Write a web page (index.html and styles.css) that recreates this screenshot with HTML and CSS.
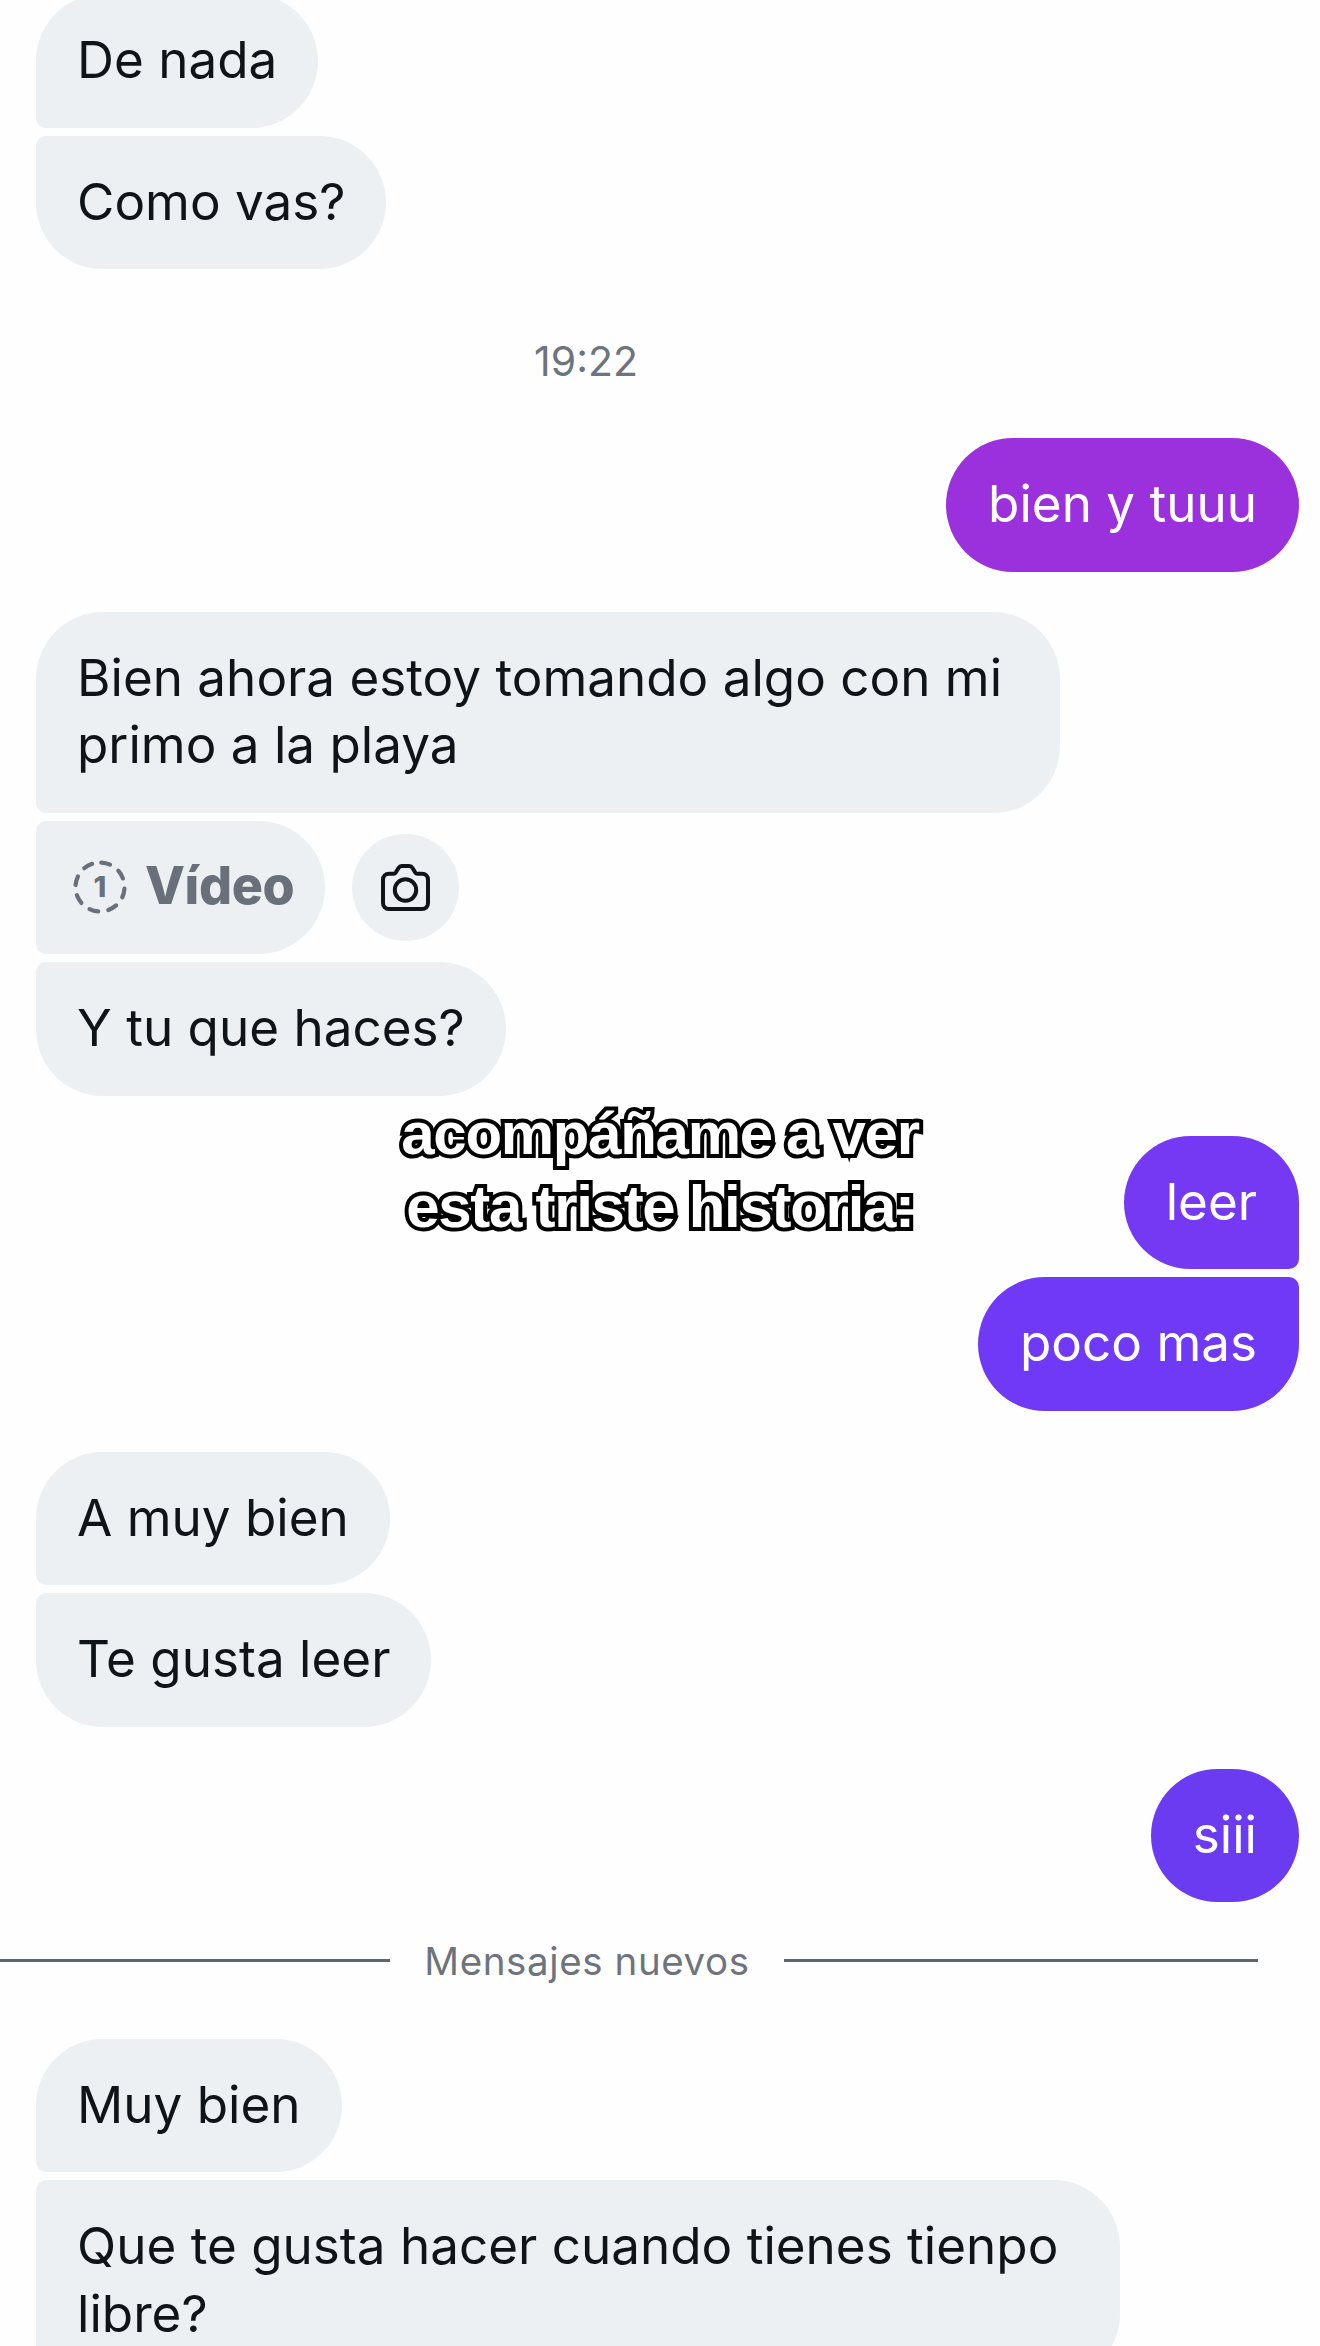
FILE: index.html
```html
<!DOCTYPE html>
<html lang="es">
<head>
<meta charset="utf-8">
<title>Chat</title>
<link rel="stylesheet" href="styles.css">
</head>
<body>
<main class="chat">
  <section class="group in first">
    <div class="bubble in-top">De nada</div>
    <div class="bubble in-end">Como vas?</div>
  </section>
  <div class="time">19:22</div>
  <section class="group out g-bien">
    <div class="bubble solo c-magenta">bien y tuuu</div>
  </section>
  <section class="group in g-ahora">
    <div class="bubble in-top wide-a">Bien ahora estoy tomando algo con mi primo a la playa</div>
    <div class="media-row">
      <div class="bubble in-mid video">
        <svg class="once" viewBox="0 0 54 54" aria-hidden="true">
          <circle cx="27" cy="27" r="24.500" fill="none" stroke="#6a7079" stroke-width="4.200" stroke-dasharray="9 10.240" stroke-linecap="round" transform="rotate(-87 27 27)"/>
        </svg>
        <span class="once-n">1</span>
        <span class="video-label">Vídeo</span>
      </div>
      <button class="cam" aria-label="Cámara">
        <svg viewBox="0 0 49 47" aria-hidden="true">
          <path d="M8 9.700H12.500c1 0 1.800-.5 2.400-1.400L17.500 4c.8-1.300 1.800-2 3.300-2h7.400c1.500 0 2.500.7 3.300 2l2.600 4.300c.6.900 1.400 1.400 2.400 1.400H41c3.600 0 6 2.400 6 6V39c0 3.600-2.400 6-6 6H8c-3.600 0-6-2.400-6-6V15.700c0-3.600 2.400-6 6-6z" fill="none" stroke="#0f1419" stroke-width="4" stroke-linejoin="round"/>
          <circle cx="24.500" cy="26" r="10.700" fill="none" stroke="#0f1419" stroke-width="4"/>
        </svg>
      </button>
    </div>
    <div class="bubble in-end">Y tu que haces?</div>
  </section>
  <section class="group out g-leer">
    <div class="bubble out-top c-violet">leer</div>
    <div class="bubble out-end c-indigo">poco mas</div>
  </section>
  <section class="group in g-muy">
    <div class="bubble in-top">A muy bien</div>
    <div class="bubble in-end">Te gusta leer</div>
  </section>
  <section class="group out g-siii">
    <div class="bubble solo c-blue">siii</div>
  </section>
  <div class="divider"><span class="rule"></span><span class="divider-text">Mensajes nuevos</span><span class="rule rule-r"></span></div>
  <section class="group in g-new">
    <div class="bubble in-top">Muy bien</div>
    <div class="bubble in-tail wide-b">Que te gusta hacer cuando tienes tienpo libre?</div>
  </section>
</main>
<div class="caption">acompáñame a ver<br>esta triste historia:</div>
</body>
</html>
```
FILE: styles.css
```css
* { box-sizing: border-box; }
html, body { margin: 0; padding: 0; }
body {
  position: relative;
  width: 1320px;
  height: 2346px;
  overflow: hidden;
  background: #fefefe;
  color: #0f1419;
  font-family: Inter, "Liberation Sans", sans-serif;
}
.chat { display: flex; flex-direction: column; padding: 0 21px 0 36px; }
.group { display: flex; flex-direction: column; gap: 8px; }
.group.in { align-items: flex-start; }
.group.out { align-items: flex-end; }
.first { margin-top: -6px; }
.bubble {
  padding: 32px 41px 34px;
  font-size: 51.200px;
  line-height: 67.500px;
  background: #ecf0f3;
  border-radius: 67px;
}
.in-top { border-radius: 67px 67px 67px 10px; }
.in-mid { border-radius: 10px 67px 67px 10px; }
.in-end { border-radius: 10px 67px 67px 67px; }
.in-tail { border-radius: 10px 67px 67px 10px; }
.out-top { border-radius: 67px 67px 10px 67px; }
.out-end { border-radius: 67px 10px 67px 67px; }
.c-magenta, .c-violet, .c-indigo, .c-blue { color: #fff; padding-left: 42px; padding-right: 42px; }
.c-magenta { background: #9a31dd; }
.c-violet { background: #7539f3; }
.c-indigo { background: #7039f5; }
.c-blue { background: #6b3bf2; }
.wide-a { width: 1024px; }
.wide-b { width: 1084px; }
.time {
  margin-top: 69px;
  padding-right: 163px;
  text-align: center;
  font-size: 41px;
  line-height: 46px;
  color: #6e747d;
}
.g-bien { margin-top: 54px; }
.g-ahora { margin-top: 40px; }
.g-leer { margin-top: 40px; }
.g-muy { margin-top: 41px; }
.g-siii { margin-top: 42px; }
.g-new { margin-top: 55px; }
.media-row { display: flex; align-items: center; gap: 27px; }
.video {
  display: flex;
  align-items: center;
  width: 289px;
  height: 133.500px;
  padding: 0 0 0 37px;
  position: relative;
}
.once { width: 54px; height: 54px; flex: none; }
.once-n {
  position: absolute;
  left: 37px;
  width: 54px;
  text-align: center;
  font-size: 29px;
  line-height: 54px;
  font-weight: 800;
  color: #6a7079;
}
.video-label {
  margin-left: 18px;
  padding-bottom: 4px;
  font-size: 52px;
  font-weight: 800;
  letter-spacing: -0.4px;
  color: #6a7079;
}
.cam {
  display: flex;
  align-items: center;
  justify-content: center;
  width: 107px;
  height: 107px;
  padding: 0;
  border: 0;
  border-radius: 50%;
  background: #ecf0f3;
}
.cam svg { width: 49px; height: 47px; }
.divider {
  display: flex;
  align-items: center;
  margin: 35.500px 0 0 -36px;
  height: 46px;
  width: 1258px;
}
.rule { flex: none; width: 390px; height: 3px; background: #5f676d; }
.rule-r { width: 474px; }
.divider-text {
  flex: 1;
  text-align: center;
  font-size: 38.500px;
  line-height: 46px;
  letter-spacing: 0.6px;
  color: #6e747d;
}
.caption {
  position: absolute;
  top: 1097px;
  left: 300px;
  width: 720px;
  text-align: center;
  font-family: "Liberation Sans", Arial, sans-serif;
  font-size: 60px;
  line-height: 73px;
  font-weight: 700;
  letter-spacing: -1.300px;
  word-spacing: -1px;
  color: #fff;
  -webkit-text-stroke: 8px #000;
  paint-order: stroke fill;
}
```
